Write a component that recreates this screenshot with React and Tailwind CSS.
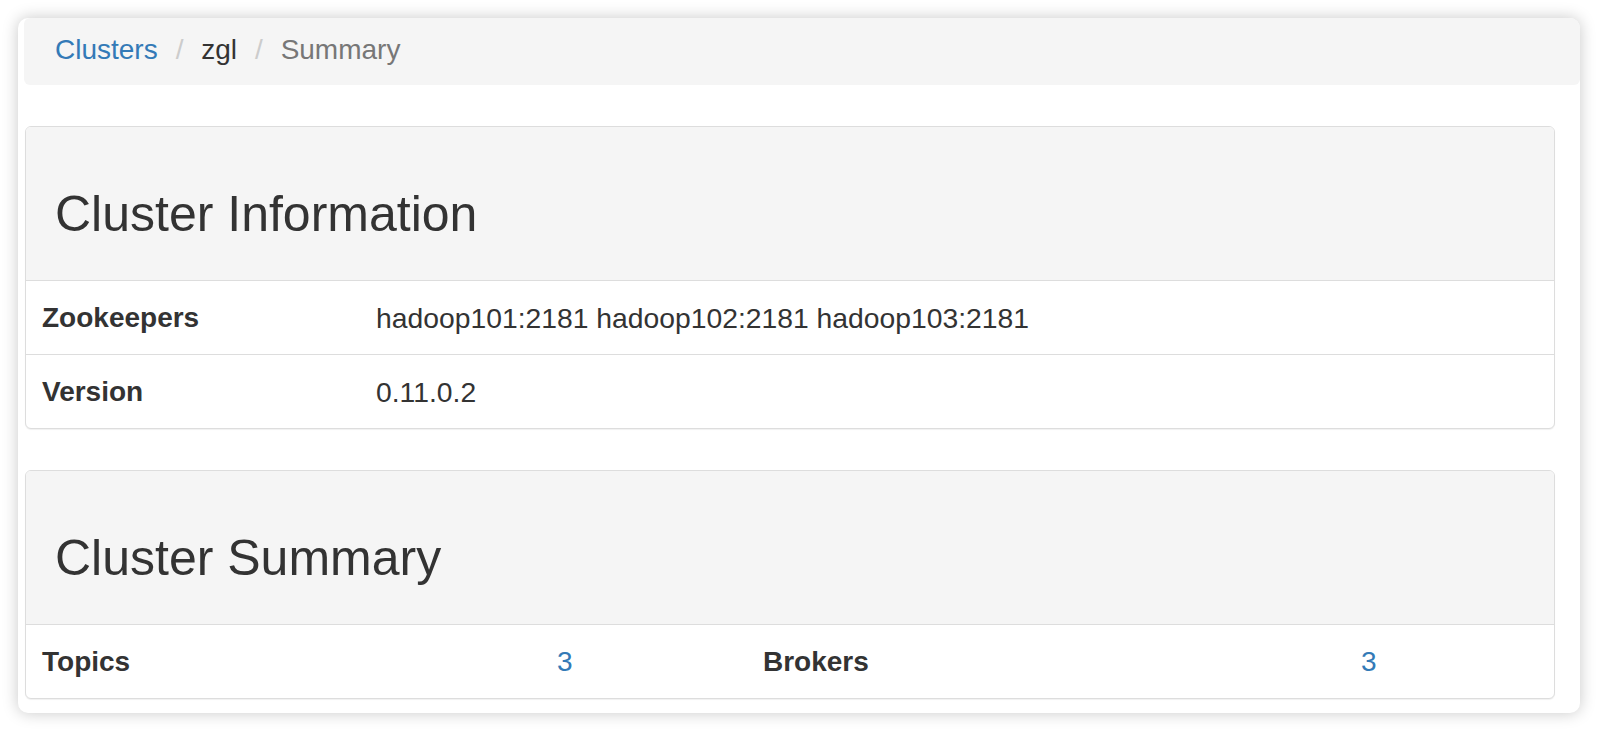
const font = { fontFamily: '"Liberation Sans", Arial, sans-serif' };

const Panel = ({ title, children }) => (
  <div className="ml-[7px] mr-[25px] border border-[#dddddd] rounded-[6px] bg-white shadow-[0_1px_1px_rgba(0,0,0,0.06)] overflow-hidden">
    {/* Heading */}
    <div className="bg-[#f5f5f5] border-b border-[#dddddd] pl-[29px] pt-[61px] pb-[39px]">
      <h3 className="text-[50px] leading-[53px] text-[#333333] font-normal">{title}</h3>
    </div>
    {children}
  </div>
);

export default function App() {
  return (
    <div style={font} className="w-[1598px] h-[732px] bg-white pt-[18px] px-[18px] text-[#333333]">
      <div className="h-[695px] bg-white rounded-[10px] overflow-hidden shadow-[0_0_16px_rgba(0,0,0,0.22)]">
        {/* Breadcrumb */}
        <div className="ml-[6px] h-[67px] bg-[#f5f5f5] rounded-[6px] rounded-tr-none pl-[31px] pt-[12px]">
          <div className="flex text-[28px] leading-[40px]">
            <span className="text-[#337ab7]">Clusters</span>
            <span className="ml-[18px] mr-[10px] text-[#cccccc]">/{'\u00a0'}</span>
            <span className="text-[#333333]">zgl</span>
            <span className="ml-[18px] mr-[10px] text-[#cccccc]">/{'\u00a0'}</span>
            <span className="text-[#777777]">Summary</span>
          </div>
        </div>

        <div className="mt-[41px] flex flex-col gap-[41px]">
          {/* Cluster Information */}
          <Panel title="Cluster Information">
            <div className="flex h-[73px] items-center text-[28px] leading-[40px]">
              <div className="w-[334px] pl-[16px] font-bold">Zookeepers</div>
              <div className="pl-[16px] text-[28.3px]">hadoop101:2181 hadoop102:2181 hadoop103:2181</div>
            </div>
            <div className="flex h-[74px] items-center border-t border-[#dddddd] text-[28px] leading-[40px]">
              <div className="w-[334px] pl-[16px] font-bold">Version</div>
              <div className="pl-[16px] text-[28.3px]">0.11.0.2</div>
            </div>
          </Panel>

          {/* Cluster Summary */}
          <Panel title="Cluster Summary">
            <div className="grid grid-cols-[515px_206px_598px_1fr] h-[73px] items-center text-[28px] leading-[40px]">
              <div className="pl-[16px] font-bold">Topics</div>
              <div className="pl-[16px] text-[#337ab7]">3</div>
              <div className="pl-[16px] font-bold">Brokers</div>
              <div className="pl-[16px] text-[#337ab7]">3</div>
            </div>
          </Panel>
        </div>
      </div>
    </div>
  );
}
